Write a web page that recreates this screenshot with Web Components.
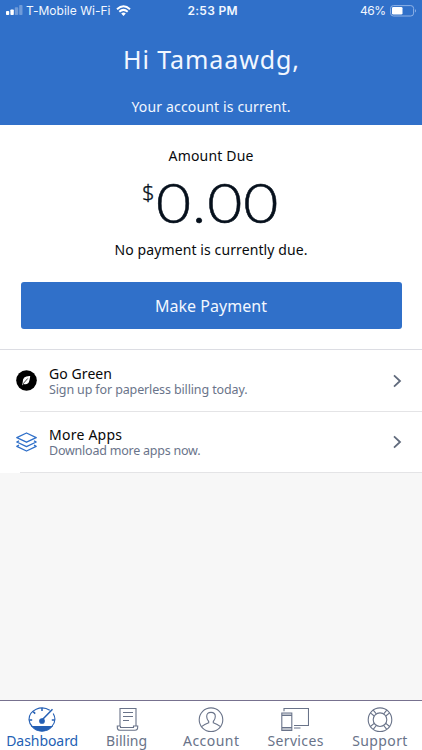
<!DOCTYPE html>
<html lang="en"><head><meta charset="utf-8"><title>Dashboard</title>
<style>html,body{margin:0;height:100%;background:#f7f7f7}body{font-family:"Noto Sans","Open Sans",sans-serif;overflow:hidden}</style></head>
<body><account-app></account-app>
<script>
const define=(name,html,setup)=>customElements.define(name,class extends HTMLElement{
  constructor(){super();this.attachShadow({mode:'open'}).innerHTML=html;}
  connectedCallback(){if(setup)setup(this,this.shadowRoot);}
});

// A single line whose tracking is set so that it spans the width in its w attribute.
define('text-line',`<style>:host{display:block;white-space:nowrap}span{display:inline-block}</style><span></span>`,(el,root)=>{
  const s=root.querySelector('span');s.textContent=el.getAttribute('text');
  const w=+el.getAttribute('w'),n=s.textContent.length;
  const gap=(w-s.getBoundingClientRect().width)/(n-1);
  s.style.letterSpacing=gap+'px';s.style.marginRight=-gap+'px';
});

define('status-bar',`<style>
:host{display:grid;grid-template-columns:1fr auto 1fr;align-items:center;height:22px;padding:0 5px 0 6px;color:#f2f7ff;font:12px/22px Inter,sans-serif}
div{display:flex;align-items:center}.right{justify-content:flex-end}.time{font-weight:600;margin-left:2px}svg{display:block}
.left svg:first-child{margin-right:3px}.left svg:last-child{margin-left:5px}.right svg{margin-left:4px}
</style>
<div class="left"><svg width="17" height="12"><g fill="#fff"><rect y="6" width="3.2" height="4" rx=".8"/><rect x="4.4" y="4.5" width="3.4" height="5.5" rx=".8"/><g opacity=".3"><rect x="8.8" y="2.2" width="3.4" height="7.8" rx=".8"/><rect x="13.2" y="0" width="3.3" height="10" rx=".8"/></g></g></svg>
<text-line text="T-Mobile Wi-Fi" w="84.5"></text-line>
<svg width="15" height="12" viewBox="0 0 15 12" fill="none" stroke="#fff" stroke-width="2"><path d="M1 4.2Q7.5-1.6 14 4.2M3.3 6.7Q7.5 3.1 11.7 6.7"/><path d="M5.2 8.5Q7.5 6.7 9.8 8.5L7.5 10.9Z" fill="#fff" stroke="none"/></svg></div>
<text-line class="time" text="2:53 PM" w="50"></text-line>
<div class="right"><text-line text="46%" w="26"></text-line>
<svg width="27" height="12" viewBox="0 0 27 12"><rect x=".6" y=".6" width="23" height="10.4" rx="2.8" fill="none" stroke="#8fb2e6"/><rect x="2" y="2" width="10.5" height="7.6" rx="1.3" fill="#fff"/><path d="M25 4Q27 5.8 25 7.6Z" fill="#8fb2e6"/></svg></div>`);

define('page-hero',`<style>
:host{display:flex;flex-direction:column;align-items:center;height:125px;background:#3070c9;color:#f2f7ff}
status-bar{width:100%;box-sizing:border-box}.hi{font-size:25px;line-height:36px;margin-top:19px}.sub{font-size:14px;line-height:20px;margin-top:20px}
</style><status-bar></status-bar><text-line class="hi" text="Hi Tamaawdg," w="176"></text-line><text-line class="sub" text="Your account is current." w="159"></text-line>`);

define('amount-due',`<style>
:host{display:flex;flex-direction:column;align-items:center;height:224px;background:#fff;color:#080a0d;font-size:14px;line-height:20px;border-bottom:1px solid #dcdde3}
.a{margin-top:21px}.sum{display:flex;align-items:flex-start;height:62px;margin-top:5px;color:#06101c;width:138px}
.cur{font:22px/26px "Noto Sans",sans-serif;font-weight:300;margin-top:7px;width:14px;-webkit-text-stroke:.3px}.num{font:300 55px/62px Lato,sans-serif;letter-spacing:.9px;transform:scaleX(1.1);transform-origin:0 0;white-space:nowrap;-webkit-text-stroke:.5px}
.n{margin-top:7px}
button{width:381px;height:47px;margin:22px 0 0;border:0;border-radius:3px;background:#3070c9;color:#f2f7ff;font:16px/24px "Noto Sans",sans-serif;padding:0;display:flex;align-items:center;justify-content:center}
</style><text-line class="a" text="Amount Due" w="85"></text-line>
<div class="sum"><span class="cur">$</span><span class="num">0.00</span></div>
<text-line class="n" text="No payment is currently due." w="193"></text-line>
<button><text-line text="Make Payment" w="112"></text-line></button>`);

define('link-row',`<style>
:host{display:grid;grid-template-columns:33px 1fr 12px;align-items:center;height:61px;padding:0 18px 2px 16px;background:linear-gradient(#e4e4e6,#e4e4e6) 20px 100%/100% 1px no-repeat #fff;box-sizing:border-box}
:host([first]){height:62px;padding-bottom:1px}
::slotted(svg){display:block}.t{font-size:14px;line-height:18px;color:#080808}.d{font-size:12.5px;line-height:14px;color:#6a748a}svg{display:block}
</style><slot></slot><div><text-line class="t"></text-line><text-line class="d"></text-line></div><svg width="12" height="14" viewBox="0 0 12 14" fill="none" stroke="#606a7c" stroke-width="1.8"><path d="M2 1.3 8 7 2 12.7"/></svg>`,(el,root)=>{
  const [t,d]=root.querySelectorAll('text-line');
  for(const [node,key] of [[t,'title'],[d,'note']]){
    const line=node.cloneNode();line.setAttribute('text',el.dataset[key]);line.setAttribute('w',el.dataset[key+'W']);node.replaceWith(line);
  }
});

define('tab-item',`<style>
:host{display:flex;flex-direction:column;align-items:center;flex:1;color:#697389;font-size:14px;line-height:18px}
:host([active]){color:#245fb4}::slotted(svg){display:block;fill:none;stroke:currentColor;stroke-width:1.1}div{height:25px;margin-top:6px}
</style><div><slot></slot></div>`,(el,root)=>{
  const l=document.createElement('text-line');l.setAttribute('text',el.dataset.label);l.setAttribute('w',el.dataset.w);root.append(l);
});

define('tab-bar',`<style>:host{display:flex;height:50px;border-top:1px solid #77718f;background:#fff;box-sizing:border-box}</style>
<tab-item active data-label="Dashboard" data-w="72"><svg width="28" height="26" viewBox="0 0 28 26"><path d="M4.2 19.5A13 11.8 0 0 1 1 12.6A13 11.6 0 0 1 21.8 3.3M25.2 6.5A13 11.8 0 0 1 23.8 19.5"/><path d="M4 19.5H24Q20 24.2 14 24.2T4 19.5Z" fill="currentColor"/><path d="M14 1v3M5.2 4.6l2 2M1.2 13h3M26.8 13h-3M14 13 24.5 2.3" stroke-width="1.5"/><circle cx="14" cy="14" r="2.3" fill="currentColor"/></svg></tab-item>
<tab-item data-label="Billing" data-w="41"><svg width="24" height="26" viewBox="0 0 24 26"><path d="M5 19V1.5H21V19M5 19H2.3V20.5Q2.3 23.3 5 23.3H20Q22.7 23.3 22.7 20V19H18.5V20.5H5.5V19M8 5.5H18M8 9.5H18M8 13.5H14"/></svg></tab-item>
<tab-item data-label="Account" data-w="56"><svg width="26" height="26" viewBox="0 0 26 26"><circle cx="13" cy="12.7" r="11.8"/><path d="M3.5 19.7Q6.5 17.2 10.7 15.8V14.5Q8.7 12.4 8.7 9.5Q8.7 5.4 13 5.4T17.3 9.5Q17.3 12.4 15.3 14.5V15.8Q19.5 17.2 22.5 19.7"/></svg></tab-item>
<tab-item data-label="Services" data-w="56"><svg width="28" height="26" viewBox="0 0 28 26"><path d="M3 4.2V1.5H27.5V18.5H13M13 21H19.5M.8 6H10.8V23.5H.8ZM.8 8.5H10.8M.8 20.5H10.8"/><path d="M1 6.5H10.5V8H1ZM1 21H10.5V23H1Z" fill="currentColor" opacity=".45" stroke="none"/></svg></tab-item>
<tab-item data-label="Support" data-w="55"><svg width="26" height="26" viewBox="0 0 26 26"><g transform="translate(13 12.7)"><circle r="11.8"/><circle r="6.8"/><path d="M-2-11.6-1.5-6.7M2-11.6 1.5-6.7M-2 11.6-1.5 6.7M2 11.6 1.5 6.7M-11.6-2-6.7-1.5M-11.6 2-6.7 1.5M11.6-2 6.7-1.5M11.6 2 6.7 1.5" transform="rotate(45)"/></g></svg></tab-item>`);

define('account-app',`<style>:host{display:flex;flex-direction:column;height:750px;background:#f7f7f7}tab-bar{margin-top:auto}</style>
<page-hero></page-hero><amount-due></amount-due>
<link-row first data-title="Go Green" data-title-w="63" data-note="Sign up for paperless billing today." data-note-w="198.5"><svg width="21" height="21" viewBox="0 0 21 21"><circle cx="10.5" cy="10.5" r="10.3"/><path d="M14.2 6.1Q6.5 5.7 6.7 12.2L6 15.5 7.5 14Q12.5 15.2 13.4 10.5Q14.1 8.2 14.2 6.1Z" fill="#fff"/><path d="M6.8 14.1 11.7 8.5" fill="none" stroke="#000" stroke-width=".7"/></svg></link-row>
<link-row data-title="More Apps" data-title-w="73" data-note="Download more apps now." data-note-w="151.5"><svg width="21" height="20" viewBox="0 0 21 20" fill="none" stroke="#3070c9" stroke-width="1.35" stroke-linejoin="round"><path d="M.8 5.6 10.5 1 20.2 5.6 10.5 10.2ZM3 8.8.8 10 10.5 14.6 20.2 10 18 8.8M3 13.1.8 14.3 10.5 19 20.2 14.3 18 13.1"/></svg></link-row>
<tab-bar></tab-bar>`);
</script></body></html>
